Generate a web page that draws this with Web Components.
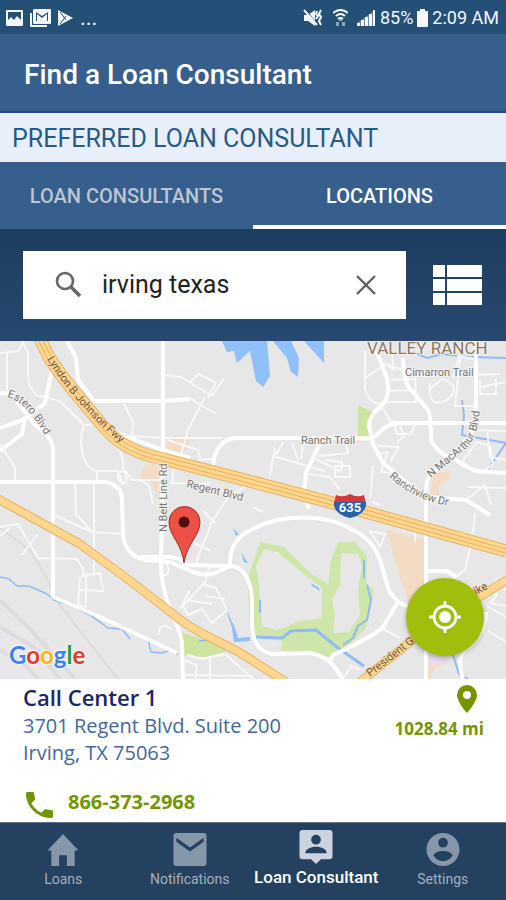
<!DOCTYPE html>
<html lang="en">
<head>
<meta charset="utf-8">
<meta name="viewport" content="width=device-width, initial-scale=1">
<title>Find a Loan Consultant</title>
<style>
  :root {
    --blue: #365f8d;
    --blue-dark: #244f76;
    --navy: #24415f;
    --green: #a0bf0d;
    --green-dark: #749500;
    --pad: 24px;
  }
  body {
    margin: 0;
    font-family: Roboto, "Liberation Sans", sans-serif;
    background: #fff;
  }
</style>
</head>
<body>
<loan-app></loan-app>

<script>
class StatusBar extends HTMLElement {
  constructor() {
    super();
    this.attachShadow({ mode: 'open' });
  }

  connectedCallback() {
    this.shadowRoot.innerHTML = `
      <style>
        :host {
          display: flex;
          align-items: center;
          justify-content: space-between;
          height: 34px;
          padding: 2px 7px 0 5px;
          box-sizing: border-box;
          background: var(--blue-dark);
          color: #f4f8fc;
          font-size: 18px;
          line-height: 20px;
        }
        div { display: flex; align-items: center; gap: 6px; }
        .right { gap: 4px; }
        .dots { font-size: 22px; }
        svg { display: block; fill: currentColor; }
        .wifi { margin: 0 4px 0 6px; }
      </style>
      <div>
        <svg width="19" height="18" viewBox="0 0 19 18"><path fill-rule="evenodd" d="M2 1h15a1 1 0 0 1 1 1v14a1 1 0 0 1-1 1H2a1 1 0 0 1-1-1V2a1 1 0 0 1 1-1zm1 2v8l3-3 3 3 3-4 4 4V3z"/></svg>
        <svg width="21" height="18" viewBox="0 0 21 18"><path d="M0 4h2v12h15v2H1a1 1 0 0 1-1-1z"/><path fill-rule="evenodd" d="M4 0h16a1 1 0 0 1 1 1v13a1 1 0 0 1-1 1H4a1 1 0 0 1-1-1V1a1 1 0 0 1 1-1zm2 3v9h1V5l5 4 5-4v7h1V3l-6 4z"/></svg>
        <svg width="17" height="18" viewBox="0 0 17 18"><path d="M1 1l15 8-15 8z"/><path d="M3 3l6 8M3 15l6-8" fill="none" stroke="#244f76"/></svg>
        <span class="dots">...</span>
      </div>
      <div class="right">
        <svg width="20" height="18" viewBox="0 0 20 18"><path d="M1 6h4l7-5v16l-7-5H1z"/><path d="M3 1l12 15" stroke="#244f76"/><path d="M1 1l13 15M14 2l-1 3 2 2-2 3M18 1l-2 4 2 3-2 4 2 4" fill="none" stroke="currentColor" stroke-width="2"/></svg>
        <svg class="wifi" width="15" height="18" viewBox="0 0 15 18"><path d="M0 4Q7.500-2 15 4M3 7q4.500-4 9 0M5 10q2.500-2 5 0" fill="none" stroke="currentColor" stroke-width="2"/><path d="M6 10h3v2H6zM3 13h3v4H3zM9 13h3v4H9z" opacity=".5"/></svg>
        <svg width="20" height="18" viewBox="0 0 20 18"><path d="M1 14h3v3H1zM5 11h3v6H5zM9 8h3v9H9zM13 5h3v12h-3zM17 1h2v16h-2z"/><path d="M1 17V14L19 1V17z" opacity=".35"/></svg>
        <span>85%</span>
        <svg width="11" height="18" viewBox="0 0 11 18"><path d="M3 0h5v2h3v15a1 1 0 0 1-1 1H1a1 1 0 0 1-1-1V2h3z"/></svg>
        <span>2:09 AM</span>
      </div>
    `;
  }
}

class AppHeader extends HTMLElement {
  constructor() {
    super();
    this.attachShadow({ mode: 'open' });
  }

  connectedCallback() {
    this.shadowRoot.innerHTML = `
      <style>
        :host { display: block; }
        h1 {
          margin: 0;
          padding: 25px var(--pad) 20px;
          font-size: 28px;
          line-height: 32px;
          font-weight: 500;
          color: #fff;
          background: var(--blue);
        }
        h2 {
          margin: 0;
          padding: 10px 12px 7px;
          border-top: 2px solid #1f4a87;
          font-size: 25px;
          line-height: 32px;
          font-weight: 400;
          color: #285a87;
          background: #e8effa;
        }
      </style>
      <h1><slot></slot></h1>
      <h2><slot name="sub"></slot></h2>
    `;
  }
}

class TabBar extends HTMLElement {
  constructor() {
    super();
    this.attachShadow({ mode: 'open' });
  }

  connectedCallback() {
    this.render();
  }

  render() {
    const active = this.getAttribute('active');
    const tabs = this.getAttribute('tabs').split(',');
    this.shadowRoot.innerHTML = `
      <style>
        :host { display: flex; background: var(--blue); }
        button {
          flex: 1;
          height: 67px;
          padding: 4px 0 0;
          border: 0;
          border-bottom: 4px solid transparent;
          background: none;
          font: 500 20px/24px Roboto, sans-serif;
          color: #bcc5d1;
          cursor: pointer;
        }
        button[aria-selected="true"] { color: #fff; border-color: #fff; }
      </style>
      ${tabs.map(t => `<button role="tab" aria-selected="${t === active}">${t}</button>`).join('')}
    `;
    this.shadowRoot.querySelectorAll('button').forEach(b => {
      b.addEventListener('click', () => {
        this.setAttribute('active', b.textContent);
        this.render();
      });
    });
  }
}

class SearchBar extends HTMLElement {
  constructor() {
    super();
    this.attachShadow({ mode: 'open' });
  }

  connectedCallback() {
    this.shadowRoot.innerHTML = `
      <style>
        :host {
          display: flex;
          align-items: center;
          gap: 26px;
          padding: 22px var(--pad) 22px 23px;
          background: linear-gradient(#1d3c62, #28496f);
        }
        .box {
          flex: 1;
          min-width: 0;
          display: flex;
          align-items: center;
          gap: 20px;
          height: 68px;
          box-sizing: border-box;
          padding: 0 28px 0 31px;
          background: #fff;
        }
        input {
          flex: 1;
          min-width: 0;
          padding: 0;
          border: 0;
          outline: 0;
          background: none;
          font: 400 25px/32px Roboto, sans-serif;
          color: #222;
        }
        button { padding: 0; border: 0; background: none; cursor: pointer; }
        svg { display: block; }
      </style>
      <label class="box">
        <svg width="28" height="28" viewBox="0 0 28 28" fill="none" stroke="#666" stroke-width="2.600"><circle cx="11" cy="10" r="8"/><path d="M17 16l9 9" stroke-width="3.500"/></svg>
        <input type="text" aria-label="Search locations" value="irving texas">
        <button class="clear" aria-label="Clear"><svg width="24" height="24" viewBox="0 0 24 24" stroke="#606060" stroke-width="2.400"><path d="M3 3l18 18M21 3L3 21"/></svg></button>
      </label>
      <button aria-label="List view"><svg width="50" height="42" viewBox="0 0 50 42" fill="#fff"><path d="M1 1h12v12H1zM15 1h35v12H15zM1 15h12v12H1zM15 15h35v12H15zM1 29h12v12H1zM15 29h35v12H15z"/></svg></button>
    `;
    const input = this.shadowRoot.querySelector('input');
    this.shadowRoot.querySelector('.clear').addEventListener('click', () => {
      input.value = '';
    });
  }
}

// Road geometry shares one coordinate space with the map's viewBox
const MAJOR = [
  'M163 341V450L161 562C161 605 181 625 182 643L183 679',
  'M0 482H105Q122 485 122 500L123 535Q126 556 145 560L170 562C190 570 200 578 215 573L230 566C245 566 251 582 252 600V625C253 645 262 654 275 654L310 653Q325 656 333 665L343 679',
  'M140 557H170Q180 558 187 565L230 566C229 545 239 535 253 529C280 514 325 513 353 530C385 545 381 575 390 592L398 602L414 610',
  'M398 602L383 627Q373 637 333 655L330 662',
  'M426 679V490Q427 475 433 473L462 445Q477 430 476 410V341',
  'M0 393L12 394Q19 404 35 425Q53 437 53 450V597L100 617L177 653',
  'M53 365L45 403L23 420L0 428M0 451L22 434L25 418',
  'M67 341L76 358L78 380L94 401H163L190 399',
  'M97 421L120 434L163 450L190 458',
  'M213 465Q216 440 235 438H310M253 438H360Q372 440 378 434Q387 423 400 423H506',
  'M376 350L387 378Q390 395 384 403Q369 415 369 426L373 444L383 463L400 477L426 497L466 500L490 515',
  'M403 358Q404 385 412 391L428 410Q431 415 431 440Q438 454 450 457L475 471L506 473',
  'M320 443L306 473L304 492L309 509',
  'M426 571H447L456 577',
  'M463 679Q457 659 464 652Q487 633 486 612'
];

const MINOR = [
  'M22 341L28 352V372L29 385L36 395L60 401L84 425L98 424M0 353L18 351L24 341M7 353V391M0 444L15 468V482',
  'M84 425Q77 445 87 465L95 471H118L122 482M97 471V482M110 440Q125 452 123 468L132 480H163M118 474q4-5 8 0q2 7-3 10q-6-3-5-10M139 479L149 486L153 504',
  'M124 404L133 422L132 436L163 438H222M163 375L181 377L212 396L224 378M190 382L199 374L216 383L208 398M205 397L188 430L181 455M189 398L216 414M168 440L198 450L200 458M198 460L212 459M175 458L172 483L210 484',
  'M75 483L76 514L92 532L123 534M94 483V574M54 515L90 531M38 534L22 555M0 527L18 524L38 558L77 559L83 569V577M80 577L78 605L87 607M81 576L100 573L103 591L80 590M86 575V604',
  'M253 482L228 497L212 522L195 565M211 551L192 542M215 523L203 511M210 565L205 582L183 606L188 615L202 609L212 623L227 610L216 588L203 584M190 590L180 609M187 600L212 604M205 596L225 599M158 635Q160 621 172 629M165 560Q173 576 163 575',
  'M365 350V390Q372 408 386 403M365 378L386 364L394 370L390 341M388 365L415 373L416 402H385M391 380L414 379M390 391L416 390M373 413L383 408L391 423M393 420L397 434H411L415 425M400 425L404 436L397 442M378 446L399 447L390 462M376 455L388 452L381 471L395 475M430 383Q427 410 447 400Q463 386 442 379L430 389M453 378L461 352L455 406H475M457 356L475 359M476 375L500 374M480 380V394H496V379M481 387L505 382M476 430L506 431M487 430L490 457L506 460M462 462L477 442L490 446L493 464L484 471L461 466',
  'M275 448L270 475M273 456L325 471M283 442L276 455M292 443L298 460M301 459L303 444L319 443M318 456L348 453L346 444M316 459L341 472L342 462L325 460M309 474L330 477L340 490M373 465L370 498M335 466H350V477H335ZM253 507L263 512M320 491L318 500M372 502L380 505M466 500L485 485L491 505M507 488L468 487',
  'M475 513Q473 540 465 570L455 578M380 547L370 531L385 534ZM383 629L400 638M343 679L351 666L360 670M0 536L10 528M489 591L497 595L490 603L506 606M487 606L506 617M495 580L506 590M488 631L506 642M187 655L202 659L225 654L253 679M210 658V679M184 660L197 665L195 679M182 675L253 676M392 512L388 520M434 524V539M415 520V542M404 516V532'
];

const FREEWAYS = [
  'M38 335L49 357C65 383 81 399 97 419S128 452 163 459L253 482L333 503L506 551',
  'M-2 499L20 511L80 544L133 583L178 618C203 638 226 642 253 661L286 682',
  'M360 682L420 634L510 578'
];

class MapView extends HTMLElement {
  constructor() {
    super();
    this.attachShadow({ mode: 'open' });
  }

  connectedCallback() {
    const road = (list, color, width) =>
      `<g fill="none" stroke="${color}" stroke-width="${width}" stroke-linejoin="round">${list.map(d => `<path d="${d}"/>`).join('')}</g>`;

    this.shadowRoot.innerHTML = `
      <style>
        :host {
          display: grid;
          position: relative;
          min-height: 240px;
          overflow: hidden;
          background: #e7e7e7;
        }
        svg { display: block; width: 100%; height: 100%; min-height: 0; }
        text { font: 11px Roboto, sans-serif; fill: #7b7672; stroke: #f2f2f2; stroke-width: 2px; paint-order: stroke; }
        .area { font-size: 17px; fill: #8f775e; }
        .hwy { fill: #765337; stroke: #fbdca0; stroke-width: 1px; }
        .shield { font-size: 13px; font-weight: 700; fill: #fff; stroke: none; }
        .logo {
          position: absolute;
          left: 9px;
          bottom: 8px;
          font: 700 24px/32px Lato, sans-serif;
          text-shadow: 0 0 2px #fff, 0 0 3px #fff;
          color: #4081ec;
        }
        .r { color: #e0392f; }
        .y { color: #f4b61c; }
        .g { color: #279b4c; }
        ::slotted(*) { position: absolute; right: 22px; bottom: 23px; }
      </style>
      <svg viewBox="0 341 506 338" preserveAspectRatio="xMidYMid slice" role="img" aria-label="Map of Irving, Texas">
        <path d="M0 595Q35 620 55 679H0z" fill="#e9e7e9"/>
        <g fill="none" stroke="#dddbdd" stroke-width="2"><path d="M0 528L30 550Q48 578 60 605L118 679"/><path d="M0 600L28 627L75 679M0 627L35 648L60 679M0 650L25 665L38 679" stroke-width="4"/></g>
        <g fill="#cde49f">
          <path d="M358 405L374 413L367 421L370 437L358 438z"/>
          <path d="M178 631L199 638L231 650L205 657L183 656z"/>
          <path fill-rule="evenodd" d="M253 563L260 542L284 547L310 573L328 584L331 560L338 542L355 542L367 556L366 583L374 590L366 628L352 642L330 657L281 650L282 641L251 636L247 580zM264 549L278 552L306 576L322 588L322 618L300 621L277 630L262 626L259 585L256 566zM341 553L358 554L362 566L358 590L360 615L349 632L333 633L335 615L332 600L340 584z" fill="#cfe6aa"/>
        </g>
        <g fill="#f4dbc4"><path d="M387 530L426 540V599L410 605Q399 580 387 530z"/><path d="M171 437L190 435L186 450L170 455L166 446zM145 465L160 464L157 498L151 482L138 480zM433 473L451 471L449 480L438 486L440 498H430zM426 657L449 655L446 663L435 668L430 679L426 678zM51 369L56 373L54 378z"/></g>
        <path d="M426 650L451 651L447 664L426 666z" fill="#eadce8"/>
        <g fill="#8fc0f9">
          <path d="M222 341L227 352L234 351L237 363L250 351L256 381L263 387L270 376L267 341z"/><path d="M273 341L287 358L291 372L298 377L299 358L291 341zM304 341L324 363V341z"/>
          <path d="M225 607L235 628L238 638L250 637V641L234 642L232 628zM233 528L239 534L236 536zM241 552L248 563L244 562zM311 583L319 588L320 591L312 586z"/>
        </g>
        <g fill="none" stroke="#8fbcf2" stroke-width="2"><path d="M253 637L282 638L291 631L316 630L338 648L364 666" stroke-width="3"/><path d="M367 585L371 600L367 620L358 626L353 638L343 645M364 560V578M260 600V613"/><path d="M413 352L427 358L442 354L468 357L506 358M462 400L464 415L462 435L506 443L488 469L487 473M453 655L459 674L468 679"/><path d="M0 577L9 579L17 586L29 586L47 594L54 600L72 606L90 615L108 628L122 629L130 639M148 640L151 652L162 653L171 650L178 655M199 641L211 640L221 646" stroke-width="1.500"/></g>
        ${road(MINOR, '#f8f8f8', 2)}
        ${road(MAJOR, '#ffffff', 4)}
        ${road(FREEWAYS.slice(0, 1), '#e6b267', 13)}
        ${road(FREEWAYS.slice(0, 1), '#fed68e', 11)}
        ${road(FREEWAYS.slice(0, 1), '#e9b264', 5)}
        ${road(FREEWAYS.slice(0, 1), '#fed68e', 3)}
        ${road(FREEWAYS.slice(1), '#e6b267', 9)}
        ${road(FREEWAYS.slice(1), '#fed68e', 7)}
        <defs>
          <path id="lyndon" d="M47 359Q72 401 119 442"/>
          <path id="ranchview" d="M389 477Q414 500 449 506"/>
          <path id="arthur" d="M431 478L464 450Q481 437 480 395"/>
          <path id="estero" d="M7 397Q25 401 43 432L53 449"/>
        </defs>
        <text class="hwy"><textPath href="#lyndon">Lyndon B Johnson Fwy</textPath></text>
        <text><textPath href="#ranchview">Ranchview Dr</textPath></text>
        <text><textPath href="#arthur">N MacArthur Blvd</textPath></text>
        <text><textPath href="#estero">Estero Blvd</textPath></text>
        <text class="area" x="367" y="354">VALLEY RANCH</text>
        <text x="405" y="376">Cimarron Trail</text>
        <text x="301" y="444">Ranch Trail</text>
        <text transform="translate(186 487) rotate(14)">Regent Blvd</text>
        <text transform="translate(167 532) rotate(-90)">N Belt Line Rd</text>
        <text class="hwy" transform="translate(370 677) rotate(-38)">President George</text>
        <text class="hwy" transform="translate(476 595) rotate(-28)">ike</text>
        <path d="M336 495q7 3 14-1q7 4 14 1l2 8h-32z" fill="#cf3b3c"/>
        <path d="M334 502h32c1 8-6 14-16 16c-10-2-17-8-16-16z" fill="#2862aa"/>
        <text class="shield" x="350" y="512" text-anchor="middle">635</text>
        <path d="M184 563C182 543 169 536 169 522a15 15 0 0 1 31 0C200 536 187 543 184 563z" fill="#ed5047" stroke="#a52e2a"/>
        <circle cx="184" cy="522" r="5.500" fill="#50100f"/>
      </svg>
      <div class="logo">G<span class="r">o</span><span class="y">o</span>g<span class="g">l</span><span class="r">e</span></div>
      <slot></slot>
    `;
  }
}

class LocateButton extends HTMLElement {
  constructor() {
    super();
    this.attachShadow({ mode: 'open' });
  }

  connectedCallback() {
    this.shadowRoot.innerHTML = `
      <style>
        :host { display: block; }
        button {
          display: grid;
          place-items: center;
          width: 78px;
          height: 78px;
          padding: 0;
          border: 0;
          border-radius: 50%;
          background: var(--green);
          box-shadow: 0 2px 5px rgba(0, 0, 0, 0.3);
          cursor: pointer;
        }
      </style>
      <button aria-label="My location">
        <svg width="32" height="32" viewBox="0 0 32 32" fill="none" stroke="#fff" stroke-width="2.800"><circle cx="16" cy="16" r="11"/><circle cx="16" cy="16" r="6" fill="#fff" stroke="none"/><path d="M16 0v5M16 27v5M0 16h5M27 16h5"/></svg>
      </button>
    `;
  }
}

class LocationCard extends HTMLElement {
  constructor() {
    super();
    this.attachShadow({ mode: 'open' });
  }

  connectedCallback() {
    const phone = this.getAttribute('phone');
    this.shadowRoot.innerHTML = `
      <style>
        :host {
          display: block;
          padding: 3px 22px 4px 23px;
          background: #fff;
          font-family: "Open Sans", sans-serif;
          color: #44699a;
        }
        .top { display: flex; justify-content: space-between; }
        h3 {
          margin: 0;
          font-size: 22px;
          line-height: 30px;
          font-weight: 600;
          color: #182862;
        }
        address { font-style: normal; font-size: 20px; line-height: 27px; }
        .distance {
          display: flex;
          flex-direction: column;
          align-items: flex-end;
          font-size: 17px;
          line-height: 24px;
          font-weight: 700;
          color: var(--green-dark);
        }
        .distance svg { margin: 3px 7px 4px 0; }
        a {
          display: flex;
          align-items: center;
          gap: 15px;
          margin-top: 20px;
          padding-left: 3px;
          font-size: 20px;
          line-height: 32px;
          font-weight: 700;
          color: var(--green-dark);
          text-decoration: none;
        }
        a svg { margin-top: 6px; }
        svg { display: block; fill: var(--green-dark); }
      </style>
      <div class="top">
        <div>
          <h3>${this.getAttribute('name')}</h3>
          <address><slot></slot></address>
        </div>
        <div class="distance">
          <svg width="20" height="28" viewBox="0 0 20 28"><path fill-rule="evenodd" d="M10 0a10 10 0 0 1 10 10c0 7-10 18-10 18S0 17 0 10A10 10 0 0 1 10 0zm0 6a4 4 0 1 0 0 8a4 4 0 0 0 0-8z"/></svg>
          <span>${this.getAttribute('distance')}</span>
        </div>
      </div>
      <a href="tel:${phone}">
        <svg width="27" height="26" viewBox="3 3 18 18" preserveAspectRatio="none"><path d="M6.620 10.790c1.440 2.830 3.760 5.140 6.590 6.590l2.200-2.200c.27-.27.67-.36 1.020-.24 1.120.37 2.330.57 3.570.57.55 0 1 .45 1 1V20c0 .55-.45 1-1 1C10.610 21 3 13.390 3 4c0-.55.45-1 1-1h3.500c.55 0 1 .45 1 1 0 1.250.2 2.450.57 3.570.11.35.03.74-.25 1.020z"/></svg>
        <span>${phone}</span>
      </a>
    `;
  }
}

const NAV_ICONS = {
  home: '<path d="M17 1L1 18h4v16h8V23h8v11h8V18h4z"/>',
  mail: '<path fill-rule="evenodd" d="M3 0h28a3 3 0 0 1 3 3v28a3 3 0 0 1-3 3H3a3 3 0 0 1-3-3V3a3 3 0 0 1 3-3zm0 5v4l14 10L31 9V5L17 15z"/>',
  consultant: '<path fill-rule="evenodd" d="M3 0h28a3 3 0 0 1 3 3v24a3 3 0 0 1-3 3h-9l-5 5-5-5H3a3 3 0 0 1-3-3V3a3 3 0 0 1 3-3zm14 5a5 5 0 1 0 0 10a5 5 0 0 0 0-10zM6 24h22c0-9-22-9-22 0z"/>',
  person: '<path fill-rule="evenodd" d="M17 0a17 17 0 1 1 0 34a17 17 0 0 1 0-34zm0 5a5 5 0 1 0 0 10a5 5 0 0 0 0-10zM7 23c4 8 16 8 20 0c-3-6-17-6-20 0z"/>'
};

class NavItem extends HTMLElement {
  constructor() {
    super();
    this.attachShadow({ mode: 'open' });
  }

  connectedCallback() {
    this.shadowRoot.innerHTML = `
      <style>
        :host { flex: 1 1 0; min-width: 0; display: block; }
        a {
          display: flex;
          flex-direction: column;
          align-items: center;
          gap: 3px;
          padding: 10px 0 12px;
          font-size: 14px;
          line-height: 18px;
          color: #a3afbf;
          text-decoration: none;
          white-space: nowrap;
        }
        svg { display: block; fill: #8797aa; }
        :host([active]) a {
          padding-top: 7px;
          font-size: 17px;
          line-height: 20px;
          font-weight: 500;
          color: #fff;
        }
        :host([active]) svg { fill: #ccd3df; }
      </style>
      <a href="#">
        <svg width="34" height="34" viewBox="0 0 34 35">${NAV_ICONS[this.getAttribute('icon')]}</svg>
        <slot></slot>
      </a>
    `;
  }
}

class LoanApp extends HTMLElement {
  constructor() {
    super();
    this.attachShadow({ mode: 'open' });
  }

  connectedCallback() {
    this.shadowRoot.innerHTML = `
      <style>
        :host {
          display: flex;
          flex-direction: column;
          min-height: 100vh;
        }
        map-view { flex: 1 1 0; }
        nav {
          display: flex;
          box-sizing: border-box;
          height: 78px;
          border-top: 1px solid #60738d;
          background: var(--navy);
        }
      </style>
      <status-bar></status-bar>
      <app-header>Find a Loan Consultant<span slot="sub">PREFERRED LOAN CONSULTANT</span></app-header>
      <tab-bar tabs="LOAN CONSULTANTS,LOCATIONS" active="LOCATIONS"></tab-bar>
      <search-bar></search-bar>
      <map-view><locate-button></locate-button></map-view>
      <location-card name="Call Center 1" distance="1028.84 mi" phone="866-373-2968">3701 Regent Blvd. Suite 200<br>Irving, TX 75063</location-card>
      <nav>
        <nav-item icon="home">Loans</nav-item>
        <nav-item icon="mail">Notifications</nav-item>
        <nav-item icon="consultant" active>Loan Consultant</nav-item>
        <nav-item icon="person">Settings</nav-item>
      </nav>
    `;
  }
}

customElements.define('status-bar', StatusBar);
customElements.define('app-header', AppHeader);
customElements.define('tab-bar', TabBar);
customElements.define('search-bar', SearchBar);
customElements.define('map-view', MapView);
customElements.define('locate-button', LocateButton);
customElements.define('location-card', LocationCard);
customElements.define('nav-item', NavItem);
customElements.define('loan-app', LoanApp);
</script>
</body>
</html>
